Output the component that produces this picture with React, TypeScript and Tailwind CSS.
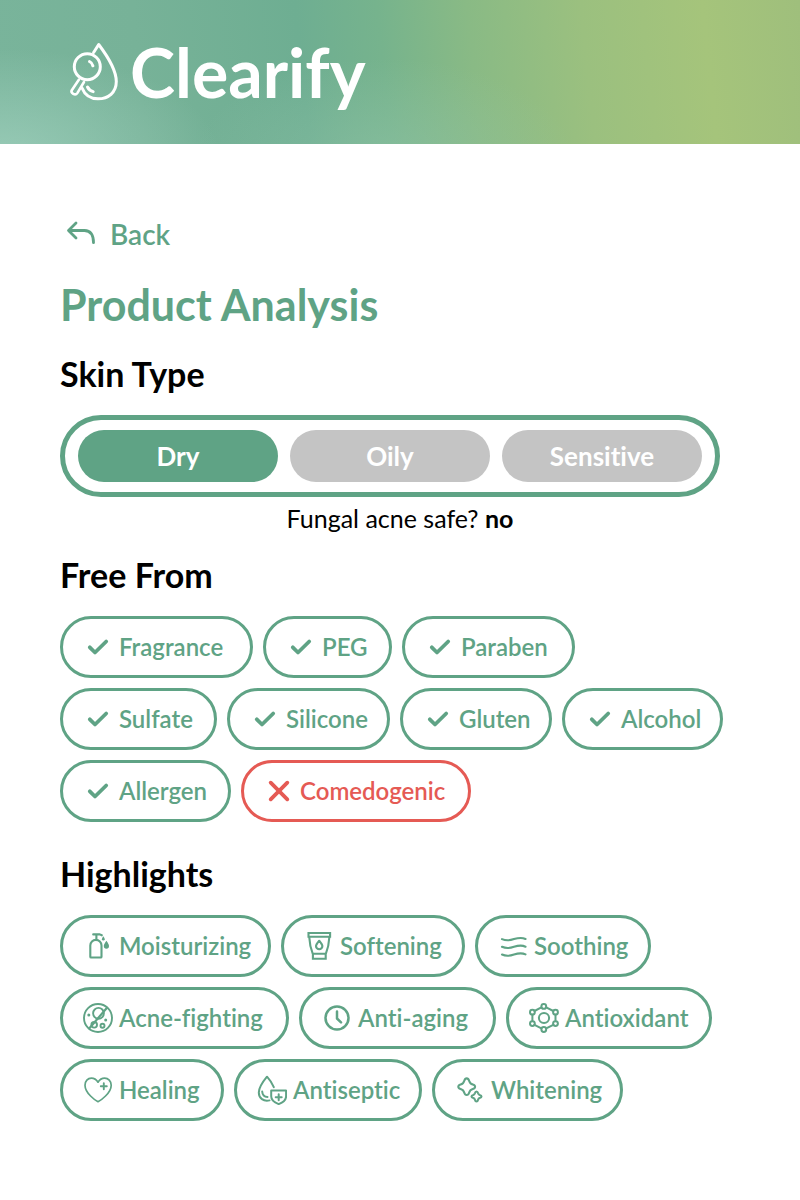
import { useState, type ReactNode } from "react";

const GREEN = "#5fa385";

type Chip = { label: string; width: string; icon: ReactNode; bad?: boolean };

function Icon({ children, weight = 2 }: { children: ReactNode; weight?: number }) {
  return (
    <svg
      viewBox="0 0 30 30"
      className="size-[30px] shrink-0"
      fill="none"
      stroke="currentColor"
      strokeWidth={weight}
      strokeLinecap="round"
      strokeLinejoin="round"
      aria-hidden="true"
    >
      {children}
    </svg>
  );
}

const check = (
  <Icon weight={3.8}>
    <path d="M6.8 15.300 12 20.500 23.200 9.500" />
  </Icon>
);

const cross = (
  <Icon weight={3.8}>
    <path d="M6.7 6.7 23.3 23.3M23.3 6.7 6.7 23.3" />
  </Icon>
);

const bottle = (
  <Icon weight={2.1}>
    <path d="M7.3 25.7V14.5a5.6 5.6 0 0 1 11.2 0v11.2a.8.8 0 0 1-.8.8H8.1a.8.8 0 0 1-.8-.8Z" />
    <path d="M10.2 3.4h6.6l2 .9M13.4 3.6v5" />
    <path d="M20.3 5.2c1 1.5 1.4 2.2 1.4 3a1.4 1.4 0 0 1-2.8 0c0-.8.4-1.5 1.4-3Z" fill="currentColor" stroke="none" />
    <path d="M23.4 9.8c1.900 2.700 2.600 3.900 2.600 5.300a2.600 2.600 0 0 1-5.200 0c0-1.400.7-2.600 2.600-5.300Z" fill="currentColor" stroke="none" />
  </Icon>
);

const tube = (
  <Icon weight={2.1}>
    <path d="M4.5 2h21.600v3.700H4.500ZM5.200 5.700c.4 6.500 1.300 11.500 3.500 17h13.200c2.200-5.500 3.100-10.500 3.500-17M8.900 22.700h12.800v5H8.900Z" strokeLinejoin="miter" />
    <path d="M15.200 9.800c2.200 2.600 3.200 4 3.200 5.300a3.200 3.200 0 0 1-6.400 0c0-1.300 1-2.700 3.200-5.300Z" />
  </Icon>
);

const waves = (
  <Icon weight={2.1}>
    <path d="M4 8.100c3.200 1.500 6.700 1.900 12 0 4.200-1.300 8.200-1.700 11.500-.1M4 15.800c3.200 1.500 6.700 1.900 12 0 4.200-1.300 8.200-1.700 11.500-.1M4 23.500c3.200 1.500 6.700 1.900 12 0 4.200-1.300 8.200-1.700 11.500-.1" />
  </Icon>
);

const noAcne = (
  <Icon weight={1.900}>
    <circle cx="15" cy="15" r="14" />
    <circle cx="15.500" cy="10.300" r="5.400" />
    <path d="M24 4.700 6.200 25.500" strokeWidth="2.200" />
    <circle cx="11.200" cy="21.800" r="2.800" />
    <circle cx="19.500" cy="22.700" r="2" />
    <circle cx="5.800" cy="12" r="1.500" fill="currentColor" stroke="none" />
    <circle cx="22.700" cy="17" r="1.500" fill="currentColor" stroke="none" />
  </Icon>
);

const clock = (
  <Icon weight={2.500}>
    <circle cx="15" cy="15" r="11.500" />
    <path d="M15 8.500v7l4 3.900" />
  </Icon>
);

const molecule = (
  <Icon weight={2}>
    <circle cx="15" cy="15" r="5.100" />
    <circle cx="14.800" cy="3.400" r="2.400" />
    <circle cx="26.500" cy="9.200" r="2.400" />
    <circle cx="26.500" cy="20.600" r="2.400" />
    <circle cx="14.800" cy="26.500" r="2.400" />
    <circle cx="3.400" cy="20.600" r="2.400" />
    <circle cx="3.400" cy="9.200" r="2.400" />
    <path d="M17.200 4.400 24.300 8M26.500 11.800V18M24.300 21.800l-7.100 3.600M12.400 25.400l-6.900-3.600M3.400 18v-6.200M5.500 8l6.900-3.600" />
  </Icon>
);

const heart = (
  <Icon weight={1.700}>
    <path d="M15 26.700C12.500 25.500 2 18.200 2 10.200 2 6 4.800 3.200 8.400 3.200c2.800 0 5 1.500 6.600 4 1.600-2.500 3.800-4 6.600-4 3.600 0 6.600 2.800 6.600 7 0 8-10.700 15.300-13.200 16.500Z" />
    <path d="M20.800 8.300v6M17.800 11.300h6" strokeWidth="1.900" />
  </Icon>
);

const dropShield = (
  <Icon weight={2}>
    <path d="M16.800 12.200C15.300 8.500 12.800 4.800 10 1.700 5.800 6.800 1.800 12.500 1.800 17.600c0 5.600 4.800 9.200 10.700 7.800" />
    <path d="M5.200 16.500c.2 3.200 2 5.400 5.300 5.500" />
    <path d="M14.200 15.600h14.900v5.600c0 3.800-3 6.300-7.400 7.900-4.400-1.600-7.500-4.100-7.500-7.900Z" />
    <path d="M21.700 19.300v6M18.700 22.300h6" />
  </Icon>
);

const sparkles = (
  <Icon weight={2.100}>
    <path d="M11.700 3.400c1.300 0 2 1 2.400 2.300.7 2.500 1.200 3.100 3.700 3.800 1.400.4 2.300 1 2.300 2.200s-.9 1.800-2.300 2.200c-2.500.7-3 1.300-3.700 3.800-.4 1.400-1.100 2.300-2.400 2.300s-2-.9-2.400-2.300c-.7-2.500-1.200-3.100-3.700-3.800-1.400-.4-2.300-1-2.300-2.200s.9-1.800 2.300-2.200c2.500-.7 3-1.300 3.700-3.800.4-1.300 1.100-2.300 2.400-2.300Z" />
    <path d="M21.500 16.500c1 0 1.300.7 1.600 1.800.3 1 .6 1.300 1.600 1.600 1.100.3 1.800.7 1.800 1.600s-.7 1.300-1.800 1.600c-1 .3-1.300.6-1.600 1.600-.3 1.100-.6 1.800-1.600 1.800s-1.300-.7-1.600-1.800c-.3-1-.6-1.300-1.600-1.600-1.100-.3-1.800-.7-1.800-1.600s.7-1.300 1.800-1.600c1-.3 1.300-.6 1.600-1.600.3-1.100.6-1.800 1.600-1.800Z" />
  </Icon>
);

const freeFrom: Chip[] = [
  { label: "Fragrance", width: "min-w-[193px]", icon: check },
  { label: "PEG", width: "min-w-[129px]", icon: check },
  { label: "Paraben", width: "min-w-[173px]", icon: check },
  { label: "Sulfate", width: "min-w-[157px]", icon: check },
  { label: "Silicone", width: "min-w-[163px]", icon: check },
  { label: "Gluten", width: "min-w-[152px]", icon: check },
  { label: "Alcohol", width: "min-w-[161px]", icon: check },
  { label: "Allergen", width: "min-w-[171px]", icon: check },
  { label: "Comedogenic", width: "min-w-[230px]", icon: cross, bad: true },
];

const highlights: Chip[] = [
  { label: "Moisturizing", width: "min-w-[211px]", icon: bottle },
  { label: "Softening", width: "min-w-[184px]", icon: tube },
  { label: "Soothing", width: "min-w-[176px]", icon: waves },
  { label: "Acne-fighting", width: "min-w-[229px]", icon: noAcne },
  { label: "Anti-aging", width: "min-w-[197px]", icon: clock },
  { label: "Antioxidant", width: "min-w-[206px]", icon: molecule },
  { label: "Healing", width: "min-w-[164px]", icon: heart },
  { label: "Antiseptic", width: "min-w-[188px]", icon: dropShield },
  { label: "Whitening", width: "min-w-[191px]", icon: sparkles },
];

function ChipList({ chips }: { chips: Chip[] }) {
  return (
    <ul className="flex flex-wrap gap-[10px]">
      {chips.map(({ label, width, icon, bad }) => (
        <li
          key={label}
          className={`flex h-[62px] items-center gap-[6px] rounded-full border-[3px] pr-3 pl-5 text-[24px] leading-8 font-semibold ${width} ${
            bad ? "border-[#e55a54] text-[#e55a54]" : "border-[#5fa385] text-[#5fa385]"
          }`}
        >
          {icon}
          <span className="whitespace-nowrap">{label}</span>
        </li>
      ))}
    </ul>
  );
}

function Logo() {
  return (
    <svg
      viewBox="0 0 60 64"
      className="h-16 w-[60px] shrink-0"
      fill="none"
      stroke="white"
      strokeWidth="3"
      strokeLinecap="round"
      strokeLinejoin="round"
      aria-hidden="true"
    >
      <path d="M27.600 12.500 32.700 4.500C41 15.500 50.300 29 50.300 41.500c0 11-8 17.300-18.300 17.300-7.500 0-13.200-3.800-16-10.800" />
      <circle cx="21.300" cy="26.700" r="13" />
      <path d="M13 39.500 5.800 50.200c-1.500 3 3.500 5.900 5.500 2.900L18 42" strokeWidth="2.600" />
      <path d="M23.500 21.500c1.800.8 2.900 2.200 3.400 4.300M21.500 47c1.200 2.500 3 3.900 5.700 4.600" />
    </svg>
  );
}

export default function App() {
  const [skin, setSkin] = useState("Dry");
  return (
    <div className="min-h-screen bg-white font-['Lato',sans-serif] text-black [font-variant-ligatures:no-common-ligatures]">
      <header className="flex h-36 items-center bg-[radial-gradient(220px_110px_at_0%_110%,rgba(165,212,194,0.7)_0%,transparent_100%),radial-gradient(190px_100px_at_48%_110%,rgba(150,200,172,0.45)_0%,transparent_100%),linear-gradient(84deg,#79b49b_0%,#77b298_18%,#6eae92_38%,#76b38d_48%,#89ba85_59%,#9bc07f_73%,#a5c47b_88%,#9fbf7c_100%)] px-[66px]">
        <a href="#home" className="flex items-center gap-1 text-white">
          <Logo />
          <span className="text-[68px] leading-[80px] font-bold">Clearify</span>
        </a>
      </header>

      <main className="px-[60px] pt-[70px] pb-20">
        <button type="button" className="flex h-10 items-center gap-3 pl-[6px] text-[28px] leading-10 font-semibold text-[#5fa385]">
          <svg viewBox="0 0 32 32" className="size-8" fill="none" stroke={GREEN} strokeWidth="2.800" strokeLinecap="round" strokeLinejoin="round" aria-hidden="true">
            <path d="M10 5 2.500 12.500 10 20M3 12.500H18.500c6 0 9 4.300 9 12.200" />
          </svg>
          Back
        </button>

        <h1 className="mt-[21px] text-[43px] leading-[60px] font-bold text-[#5fa385]">Product Analysis</h1>

        <section>
          <h2 className="mt-4 text-[34px] leading-[46px] font-bold">Skin Type</h2>
          <div role="group" aria-label="Skin type" className="mt-[18px] flex h-[82px] max-w-[660px] items-center gap-3 rounded-full border-[5px] border-[#5fa385] px-[13px]">
            {["Dry", "Oily", "Sensitive"].map((type) => (
              <button
                key={type}
                type="button"
                aria-pressed={skin === type}
                onClick={() => setSkin(type)}
                className={`h-[52px] flex-1 rounded-full text-[26px] leading-8 font-bold text-white ${
                  skin === type ? "bg-[#5fa385]" : "bg-[#c4c4c4]"
                }`}
              >
                {type}
              </button>
            ))}
          </div>
          <p className="mt-[5px] text-center text-[25px] leading-8">
            Fungal acne safe? <strong className="font-bold">no</strong>
          </p>
        </section>

        <section>
          <h2 className="mt-[18px] mb-[18px] text-[34px] leading-[46px] font-bold">Free From</h2>
          <ChipList chips={freeFrom} />
        </section>

        <section>
          <h2 className="mt-[29px] mb-[18px] text-[34px] leading-[46px] font-bold">Highlights</h2>
          <ChipList chips={highlights} />
        </section>
      </main>
    </div>
  );
}
